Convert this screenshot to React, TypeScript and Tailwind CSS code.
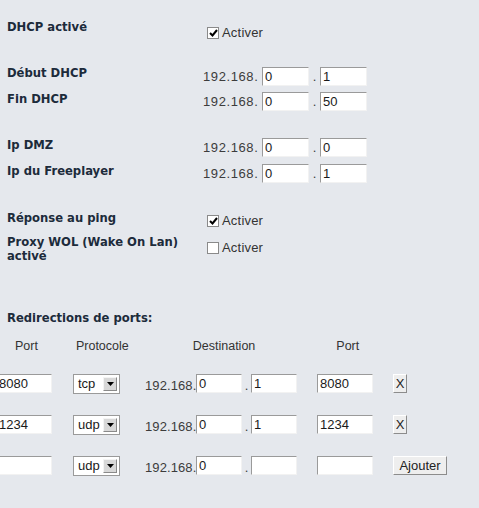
import React from "react";

const labelFont = { fontFamily: '"DejaVu Sans", Verdana, sans-serif' };

function Field({ value = "", w = "w-[47px]", ml = "" }: { value?: string; w?: string; ml?: string }) {
  return (
    <input
      readOnly
      value={value}
      className={`${w} ${ml} h-[19px] shrink-0 bg-white border-t border-l border-[#9a9a9a] border-b border-r border-b-[#f2f2f2] border-r-[#f2f2f2] pl-[2px] text-[13px] leading-[17px] text-[#1a1a1a] outline-none font-['Liberation_Sans',Arial,sans-serif]`}
    />
  );
}

function Check({ on }: { on?: boolean }) {
  return (
    <span className="inline-flex h-[12px] w-[12px] shrink-0 items-center justify-center border border-[#8a8a8a] bg-white">
      {on && (
        <svg width="9" height="8" viewBox="0 0 9 8">
          <path d="M1 4 L3.5 6.5 L8 1" fill="none" stroke="#000" strokeWidth="2" />
        </svg>
      )}
    </span>
  );
}

function IpPair({ a, b }: { a: string; b: string }) {
  return (
    <div className="flex items-center">
      <span className="w-[59px] shrink-0 whitespace-nowrap tracking-[0.6px] text-[13px] text-[#3c3c3c]">192.168.</span>
      <Field value={a} />
      <span className="w-[11px] text-center text-[13px] text-[#3c3c3c]">.</span>
      <Field value={b} />
    </div>
  );
}

function Row({ label, top, children, h = "h-[24px]" }: { label: React.ReactNode; top?: string; children: React.ReactNode; h?: string }) {
  return (
    <div className={`flex items-start ${h}`}>
      <div style={labelFont} className="w-[203px] shrink-0 pl-[7px] text-[11.6px] font-bold leading-[14px] text-[#1c2b3b]">
        {label}
      </div>
      <div className={top}>{children}</div>
    </div>
  );
}

function Activer({ on }: { on?: boolean }) {
  return (
    <div className="flex items-center gap-[3px] pl-[4px]">
      <Check on={on} />
      <span className="text-[13px] tracking-[0.2px] text-[#333]">Activer</span>
    </div>
  );
}

function Select({ value }: { value: string }) {
  return (
    <div className="flex h-[20px] w-[47px] shrink-0 items-center justify-between border border-[#9a9a9a] bg-white pl-[4px] pr-[2px]">
      <span className="text-[13px] text-[#1a1a1a]">{value}</span>
      <span className="flex h-[14px] w-[14px] items-center justify-center border border-t-[#f4f4f4] border-l-[#f4f4f4] border-b-[#8a8a8a] border-r-[#8a8a8a] bg-[#d8d8d8]">
        <svg width="7" height="4" viewBox="0 0 7 4">
          <path d="M0 0 H7 L3.5 4 Z" fill="#000" />
        </svg>
      </span>
    </div>
  );
}

function Btn({ children, w }: { children: React.ReactNode; w: string }) {
  return (
    <button className={`${w} flex h-[19px] shrink-0 items-center justify-center border border-t-[#ffffff] border-l-[#ffffff] border-b-[#8c8c8c] border-r-[#8c8c8c] bg-[#eeeeee] text-[13px] leading-[17px] text-[#222]`}>
      {children}
    </button>
  );
}

function PortRow({ port, proto, a, b, dport, add }: { port: string; proto: string; a: string; b: string; dport: string; add?: boolean }) {
  return (
    <div className="flex h-[41px] items-start">
      <Field value={port} w="w-[56px]" ml="-ml-[4px]" />
      <div className="ml-[21px] flex">
        <Select value={proto} />
      </div>
      <span className="ml-[25px] mt-[2px] w-[51px] shrink-0 whitespace-nowrap tracking-[0.1px] text-[13px] text-[#3c3c3c]">192.168.</span>
      <Field value={a} w="w-[46px]" />
      <span className="w-[9px] mt-[2px] shrink-0 text-center text-[13px] text-[#3c3c3c]">.</span>
      <Field value={b} w="w-[46px]" />
      <Field value={dport} w="w-[56px]" ml="ml-[20px]" />
      <div className="ml-[20px] flex">{add ? <Btn w="w-[54px]">Ajouter</Btn> : <Btn w="w-[14px]">X</Btn>}</div>
    </div>
  );
}

export default function App() {
  return (
    <div className="h-[508px] w-[479px] overflow-hidden bg-[#e5e8ed] font-['Liberation_Sans',Arial,sans-serif]">
      <div className="pt-[20px]">
        <Row label="DHCP activé" top="mt-[3px]" h="h-[46px]">
          <Activer on />
        </Row>
        <Row label="Début DHCP" top="mt-[1px]" h="h-[26px]">
          <IpPair a="0" b="1" />
        </Row>
        <Row label="Fin DHCP" top="mt-[0px]" h="h-[46px]">
          <IpPair a="0" b="50" />
        </Row>
        <Row label="Ip DMZ" top="mt-[0px]" h="h-[26px]">
          <IpPair a="0" b="0" />
        </Row>
        <Row label="Ip du Freeplayer" top="mt-[0px]" h="h-[47px]">
          <IpPair a="0" b="1" />
        </Row>
        <Row label="Réponse au ping" top="mt-[0px]" h="h-[24px]">
          <Activer on />
        </Row>
        <Row label={<>Proxy WOL (Wake On Lan)<br />activé</>} top="mt-[3px]" h="h-[76px]">
          <Activer />
        </Row>
      </div>
      <div style={labelFont} className="pl-[7px] text-[11.6px] font-bold leading-[14px] text-[#1c2b3b]">
        Redirections de ports:
      </div>
      <div className="mt-[14px] flex text-[12.5px] leading-[14px] text-[#333]">
        <span className="ml-[15px]">Port</span>
        <span className="ml-[38px]">Protocole</span>
        <span className="ml-[64px]">Destination</span>
        <span className="ml-[81px]">Port</span>
      </div>
      <div className="mt-[21px]">
        <PortRow port="8080" proto="tcp" a="0" b="1" dport="8080" />
        <PortRow port="1234" proto="udp" a="0" b="1" dport="1234" />
        <PortRow port="" proto="udp" a="0" b="" dport="" add />
      </div>
    </div>
  );
}
